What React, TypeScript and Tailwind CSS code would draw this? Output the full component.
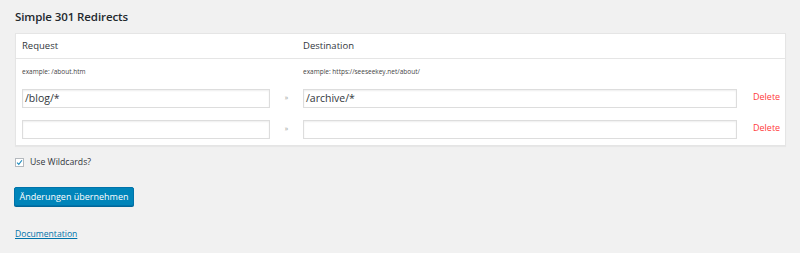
import React from "react";

const font = { fontFamily: '"Open Sans", "Noto Sans", sans-serif' };

function Row({ req, dest }: { req: string; dest: string }) {
  return (
    <div className="flex items-center">
      <div className="w-[248px] h-[19px] border border-[#dddddd] bg-white shadow-[inset_0_1px_2px_rgba(0,0,0,0.07)] flex items-center pl-[2px] text-[10.5px] text-[#32373c]">
        {req}
      </div>
      <div className="w-[33px] text-center text-[7px] text-[#999]">»</div>
      <div className="w-[434px] h-[19px] border border-[#dddddd] bg-white shadow-[inset_0_1px_2px_rgba(0,0,0,0.07)] flex items-center pl-[2px] text-[10.5px] text-[#32373c]">
        {dest}
      </div>
      <div className="pl-[16px] text-[9px] text-[#ff3b3b] -mt-[4px]">Delete</div>
    </div>
  );
}

export default function App() {
  return (
    <div className="w-[800px] h-[253px] bg-[#f1f1f1] pl-[15px] pt-[9px] text-[#444]" style={font}>
      <h1 className="text-[11.5px] font-semibold text-[#23282d] leading-[16px] tracking-[-0.1px]">Simple 301 Redirects</h1>
      <div className="mt-[8px] w-[771px] bg-white border border-[#e5e5e5] shadow-[0_1px_1px_rgba(0,0,0,0.04)]">
        <div className="h-[25px] flex items-center border-b border-[#e5e5e5] pl-[6px] text-[9.5px] text-[#32373c]">
          <div className="w-[281px]">Request</div>
          <div>Destination</div>
        </div>
        <div className="h-[26px] flex items-center pl-[6px] text-[6.5px] text-[#444]">
          <div className="w-[281px]">example: /about.htm</div>
          <div>example: https://seeseekey.net/about/</div>
        </div>
        <div className="pl-[6px] pt-[4px] pb-[6px] flex flex-col gap-[12px]">
          <Row req="/blog/*" dest="/archive/*" />
          <Row req="" dest="" />
        </div>
      </div>
      <label className="mt-[10px] flex items-center gap-[6px] text-[8.7px] text-[#32373c]">
        <span className="w-[9px] h-[9px] border border-[#b4b9be] bg-white flex items-center justify-center">
          <svg width="7" height="7" viewBox="0 0 10 10">
            <path d="M1.5 5.2 L4 7.8 L8.5 1.8" fill="none" stroke="#1e8cbe" strokeWidth="1.6" />
          </svg>
        </span>
        Use Wildcards?
      </label>
      <div className="mt-[18px]">
        <button className="w-[120px] h-[19px] -ml-[1px] rounded-[2px] bg-[#0085ba] border border-[#0073aa] text-white text-[9px] whitespace-nowrap shadow-[0_1px_0_#006799] flex items-center justify-center">
          Änderungen übernehmen
        </button>
      </div>
      <div className="mt-[19px] leading-[12px]">
        <a className="text-[8.6px] text-[#0073aa] underline">Documentation</a>
      </div>
    </div>
  );
}
